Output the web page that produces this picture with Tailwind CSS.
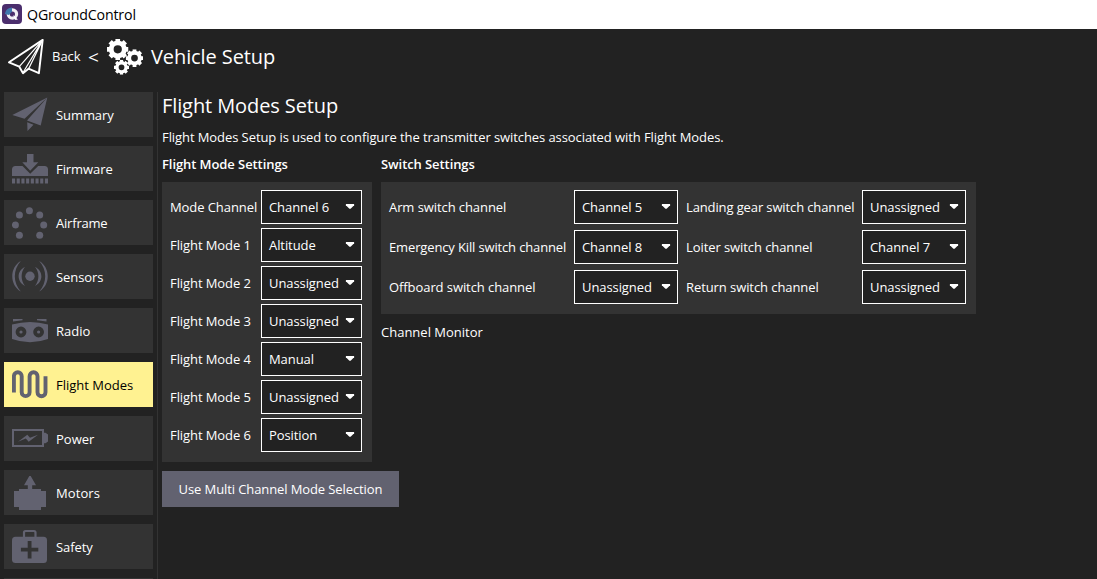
<!DOCTYPE html>
<html lang="en">
<head>
<meta charset="utf-8">
<title>QGroundControl</title>
<script src="https://cdn.jsdelivr.net/npm/@tailwindcss/browser@4"></script>
</head>
<body class="w-[1097px] h-[579px] overflow-hidden bg-[#222222] text-white font-['Open_Sans',sans-serif] text-[13px] leading-[18px] whitespace-nowrap">
<svg class="hidden">
  <symbol id="gear" viewBox="-12 -12 24 24">
    <path fill="none" stroke="currentColor" stroke-width="5.4" d="M0-7.3A7.3 7.3 0 1 1 0 7.3A7.3 7.3 0 1 1 0-7.3Z"/>
    <path stroke="currentColor" stroke-width="5.2" d="M0-12V-8M0 12V8M-12 0H-8M12 0H8M-8.5-8.5L-6-6M8.5 8.5L6 6M-8.5 8.5L-6 6M8.5-8.5L6-6"/>
  </symbol>
  <symbol id="caret" viewBox="0 0 10 6"><path fill="#fff" d="M.9 0H9.1V1.2L5.6 4.8H4.4L.9 1.2Z"/></symbol>
</svg>
<div class="h-full flex flex-col">
  <div class="h-[29px] shrink-0 bg-white text-black flex items-center pl-[2px] pb-px gap-[5px]">
    <svg class="w-5 h-5" viewBox="0 0 20 20"><rect width="20" height="20" rx="4" fill="#4b2e6d"/><circle cx="10.4" cy="10" r="4.2" fill="none" stroke="#f1eff5" stroke-width="3.2"/><path d="M2.8 10A7.4 7.4 0 0 1 10 3.4V7.5L7 11Z" fill="#3f78ae"/><path d="M11 11L16 15.6L13.3 16Z" fill="#fff"/></svg>
    <span class="pt-[2px] text-[14.2px] tracking-[-0.15px]">QGroundControl</span>
  </div>
  <div class="h-[63px] shrink-0 flex items-center pb-[8px] pl-2">
    <svg class="w-9 h-9" viewBox="0 0 36 36" fill="none" stroke="#fff" stroke-linejoin="round"><path stroke-width="1.9" d="M1 23.3L34.7 .9L30.9 34.2L20.5 29.7L15 34.2L11.3 27.7Z"/><path stroke-width="1.2" d="M34.7 .9L11.3 27.7M34.7 .9L14.8 34M34.7 .9L20.5 30"/></svg>
    <span class="ml-2 w-9 pb-[2px]">Back</span>
    <span class="w-[19px] text-[19px]">&lt;</span>
    <svg class="w-9 h-9" viewBox="0 0 36 36"><use href="#gear" x="0" y="-.4" width="21.5" height="21.5"/><use href="#gear" x="18.7" y="10.3" width="17.6" height="17.6"/><use href="#gear" x="7" y="20.8" width="15" height="15"/></svg>
    <span class="ml-2 text-[20px] leading-7 tracking-[-0.09px]">Vehicle Setup</span>
  </div>
  <div class="flex-1 min-h-0 flex">
    <nav class="w-[157px] shrink-0 pl-1 pr-1 flex flex-col gap-[9px] overflow-hidden text-[#626270]">
      <div class="h-[45px] shrink-0 bg-[#333333] flex items-center pl-2 gap-2"><svg class="w-9 h-[45px]" viewBox="0 0 36 45" fill="currentColor"><path d="M.3 23L35.3 5.5L12.5 26.8ZM35.3 5.5L28.7 33.4L15 28.6ZM15.2 30.2L21.5 32.8L15.5 39Z"/></svg><span class="text-white tracking-[-0.08px]">Summary</span></div>
      <div class="h-[45px] shrink-0 bg-[#333333] flex items-center pl-2 gap-2"><svg class="w-9 h-[45px]" viewBox="0 0 36 45" fill="currentColor"><path d="M15 8H21.5V16.3H26.3L18.2 24.7L10.3 16.3H15ZM0 30V23.5Q0 20 3.5 20H10.5L18.2 27.8L26.2 20H32.5Q36 20 36 23.5V30Z"/><path d="M0 34.9H36" stroke="currentColor" stroke-width="5" stroke-dasharray="3.1 1.6"/></svg><span class="text-white tracking-[-0.08px]">Firmware</span></div>
      <div class="h-[45px] shrink-0 bg-[#333333] flex items-center pl-2 gap-2"><svg class="w-9 h-[45px]" viewBox="0 0 36 45" fill="currentColor"><circle cx="17.4" cy="10.7" r="3.5"/><circle cx="7.4" cy="15" r="3.5"/><circle cx="27.7" cy="15" r="3.5"/><circle cx="3.4" cy="25" r="3.5"/><circle cx="31.7" cy="25" r="3.5"/><circle cx="7.4" cy="35.2" r="3.5"/><circle cx="27.7" cy="35.2" r="3.5"/></svg><span class="text-white tracking-[-0.2px]">Airframe</span></div>
      <div class="h-[45px] shrink-0 bg-[#333333] flex items-center pl-2 gap-2"><svg class="w-9 h-[45px]" viewBox="0 0 36 45" fill="currentColor"><circle cx="18" cy="22.3" r="4.7"/><path d="M8.8 7C-2.6 13.5-2.6 31 8.8 37.5C.8 29 .8 15.5 8.8 7ZM27.2 7C38.6 13.5 38.6 31 27.2 37.5C35.2 29 35.2 15.5 27.2 7ZM13 12.7C4.5 17 4.5 27.7 13 32C8.5 26 8.5 18.5 13 12.7ZM23 12.7C31.5 17 31.5 27.7 23 32C27.5 26 27.5 18.5 23 12.7Z"/></svg><span class="text-white tracking-[-0.08px]">Sensors</span></div>
      <div class="h-[45px] shrink-0 bg-[#333333] flex items-center pl-2 gap-2"><svg class="w-9 h-[45px]" viewBox="0 0 36 45" fill="currentColor"><path d="M1 11H10.5V12.3L1 13.6ZM25 11H34.5V13.6L25 12.3ZM0 16.5Q18 11.5 36 16.5V31Q18 37.5 0 31Z"/><g fill="none" stroke="#333"><circle cx="9" cy="24" r="3.5" stroke-width="3.8"/><circle cx="26.6" cy="24" r="3.5" stroke-width="3.8"/></g></svg><span class="text-white">Radio</span></div>
      <div class="h-[45px] shrink-0 bg-[#fff291] flex items-center pl-2 gap-2"><svg class="w-9 h-[45px]" viewBox="0 0 36 45" fill="none" stroke="currentColor" stroke-width="3.9"><path d="M1.9 30.5V14.2A3.9 3.9 0 0 1 9.7 14.2V30.2A3.9 3.9 0 0 0 17.6 30.2V14.2A3.9 3.9 0 0 1 25.5 14.2V30.2A3.9 3.9 0 0 0 33.5 30.2V14.2"/></svg><span class="text-black">Flight Modes</span></div>
      <div class="h-[45px] shrink-0 bg-[#333333] flex items-center pl-2 gap-2"><svg class="w-9 h-[45px]" viewBox="0 0 36 45" fill="currentColor"><path fill="none" stroke="currentColor" stroke-width="2" d="M1 14H31V30H1Z"/><path d="M32 16.7H33.5L36 18.5V25.5L33.5 27.3H32ZM6 25.7L15.3 18.8L18 21.8L26 18.8L16.7 25.7L13.8 22.5Z"/></svg><span class="text-white">Power</span></div>
      <div class="h-[45px] shrink-0 bg-[#333333] flex items-center pl-2 gap-2"><svg class="w-9 h-[45px]" viewBox="0 0 36 45" fill="currentColor"><path d="M17.3 6H18.7L24 15.3H20.2V19H29V21H34V37H29V40H7V37H2V21H7V19H15.8V15.3H12Z"/></svg><span class="text-white tracking-[0.1px]">Motors</span></div>
      <div class="h-[45px] shrink-0 bg-[#333333] flex items-center pl-2 gap-2"><svg class="w-9 h-[45px]" viewBox="0 0 36 45" fill="currentColor"><rect y="12.7" width="35" height="26.2" rx="3.5"/><path d="M12 13V8.5Q12 7 13.5 7H22Q23.5 7 23.5 8.5V13" fill="none" stroke="currentColor" stroke-width="2.2"/><path d="M17.6 17V34.4M8.9 25.7H26.3" stroke="#333" stroke-width="3.8"/></svg><span class="text-white tracking-[-0.1px]">Safety</span></div>
      <div class="h-[45px] shrink-0 bg-[#333333]"></div>
    </nav>
    <div class="w-px bg-[#333333]"></div>
    <main class="pl-1 flex flex-col items-start tracking-[-0.08px]">
      <h1 class="text-[20px] leading-7 tracking-[-0.1px]">Flight Modes Setup</h1>
      <p class="mt-2">Flight Modes Setup is used to configure the transmitter switches associated with Flight Modes.</p>
      <div class="mt-[9px] flex gap-[9px] items-start">
        <section>
          <h2 class="font-semibold">Flight Mode Settings</h2>
          <div class="mt-[9px] w-[210px] h-[280px] bg-[#333333] pt-2 pl-2 grid grid-cols-[91px_101px] auto-rows-[34px] gap-y-1 content-start items-center">
            <span>Mode Channel</span><div class="h-full border border-white bg-[#222222] flex items-center justify-between pl-[7px] pr-[6px]"><span>Channel 6</span><svg class="w-[10px] h-[6px]"><use href="#caret"/></svg></div>
            <span>Flight Mode 1</span><div class="h-full border border-white bg-[#222222] flex items-center justify-between pl-[7px] pr-[6px]"><span>Altitude</span><svg class="w-[10px] h-[6px]"><use href="#caret"/></svg></div>
            <span>Flight Mode 2</span><div class="h-full border border-white bg-[#222222] flex items-center justify-between pl-[7px] pr-[6px]"><span>Unassigned</span><svg class="w-[10px] h-[6px]"><use href="#caret"/></svg></div>
            <span>Flight Mode 3</span><div class="h-full border border-white bg-[#222222] flex items-center justify-between pl-[7px] pr-[6px]"><span>Unassigned</span><svg class="w-[10px] h-[6px]"><use href="#caret"/></svg></div>
            <span>Flight Mode 4</span><div class="h-full border border-white bg-[#222222] flex items-center justify-between pl-[7px] pr-[6px]"><span>Manual</span><svg class="w-[10px] h-[6px]"><use href="#caret"/></svg></div>
            <span>Flight Mode 5</span><div class="h-full border border-white bg-[#222222] flex items-center justify-between pl-[7px] pr-[6px]"><span>Unassigned</span><svg class="w-[10px] h-[6px]"><use href="#caret"/></svg></div>
            <span>Flight Mode 6</span><div class="h-full border border-white bg-[#222222] flex items-center justify-between pl-[7px] pr-[6px]"><span>Position</span><svg class="w-[10px] h-[6px]"><use href="#caret"/></svg></div>
          </div>
        </section>
        <section>
          <h2 class="font-semibold">Switch Settings</h2>
          <div class="mt-[9px] w-[595px] h-[132px] bg-[#333333] pt-2 pl-2 grid grid-cols-[185px_104px_184px_104px] auto-rows-[34px] gap-y-[6px] content-start items-center">
            <span>Arm switch channel</span><div class="h-full border border-white bg-[#222222] flex items-center justify-between pl-[7px] pr-[6px]"><span>Channel 5</span><svg class="w-[10px] h-[6px]"><use href="#caret"/></svg></div>
            <span class="pl-2 tracking-[-0.12px]">Landing gear switch channel</span><div class="h-full border border-white bg-[#222222] flex items-center justify-between pl-[7px] pr-[6px]"><span>Unassigned</span><svg class="w-[10px] h-[6px]"><use href="#caret"/></svg></div>
            <span class="tracking-[-0.14px]">Emergency Kill switch channel</span><div class="h-full border border-white bg-[#222222] flex items-center justify-between pl-[7px] pr-[6px]"><span>Channel 8</span><svg class="w-[10px] h-[6px]"><use href="#caret"/></svg></div>
            <span class="pl-2">Loiter switch channel</span><div class="h-full border border-white bg-[#222222] flex items-center justify-between pl-[7px] pr-[6px]"><span>Channel 7</span><svg class="w-[10px] h-[6px]"><use href="#caret"/></svg></div>
            <span>Offboard switch channel</span><div class="h-full border border-white bg-[#222222] flex items-center justify-between pl-[7px] pr-[6px]"><span>Unassigned</span><svg class="w-[10px] h-[6px]"><use href="#caret"/></svg></div>
            <span class="pl-2">Return switch channel</span><div class="h-full border border-white bg-[#222222] flex items-center justify-between pl-[7px] pr-[6px]"><span>Unassigned</span><svg class="w-[10px] h-[6px]"><use href="#caret"/></svg></div>
          </div>
          <p class="mt-[9px] tracking-normal">Channel Monitor</p>
        </section>
      </div>
      <button class="mt-[9px] w-[237px] h-9 bg-[#626270] tracking-[-0.1px]">Use Multi Channel Mode Selection</button>
    </main>
  </div>
</div>
</body>
</html>
